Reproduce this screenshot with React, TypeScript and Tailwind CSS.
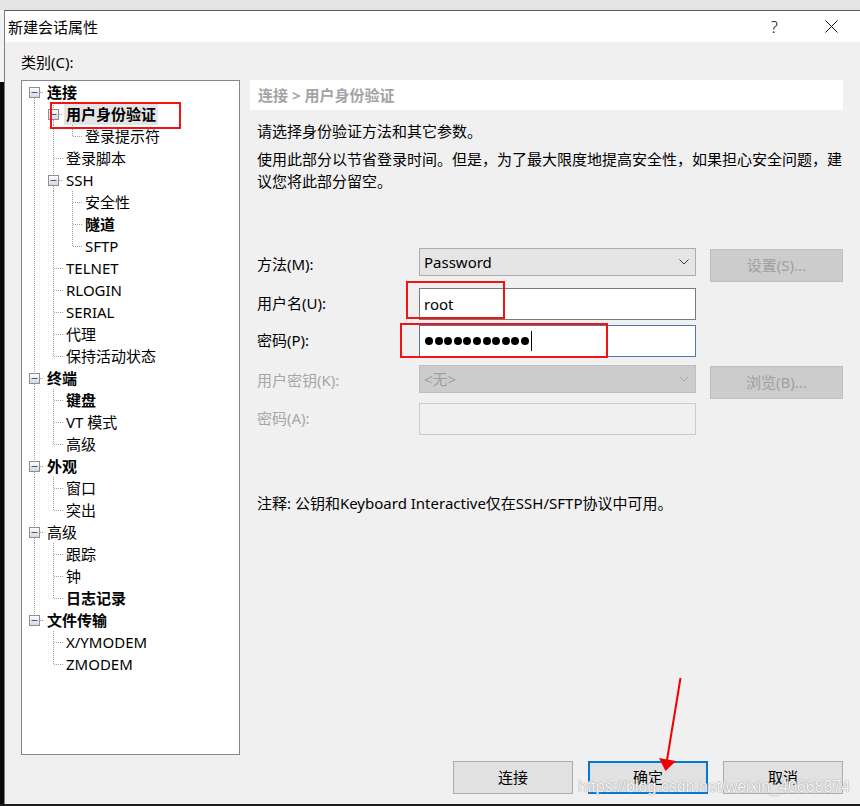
import React from "react";

type Node = { t: string; l: number; b?: boolean; box?: boolean; sel?: boolean };

const tree: Node[] = [
  { t: "连接", l: 0, b: true, box: true },
  { t: "用户身份验证", l: 1, b: true, box: true, sel: true },
  { t: "登录提示符", l: 2 },
  { t: "登录脚本", l: 1 },
  { t: "SSH", l: 1, box: true },
  { t: "安全性", l: 2 },
  { t: "隧道", l: 2, b: true },
  { t: "SFTP", l: 2 },
  { t: "TELNET", l: 1 },
  { t: "RLOGIN", l: 1 },
  { t: "SERIAL", l: 1 },
  { t: "代理", l: 1 },
  { t: "保持活动状态", l: 1 },
  { t: "终端", l: 0, b: true, box: true },
  { t: "键盘", l: 1, b: true },
  { t: "VT 模式", l: 1 },
  { t: "高级", l: 1 },
  { t: "外观", l: 0, b: true, box: true },
  { t: "窗口", l: 1 },
  { t: "突出", l: 1 },
  { t: "高级", l: 0, box: true },
  { t: "跟踪", l: 1 },
  { t: "钟", l: 1 },
  { t: "日志记录", l: 1, b: true },
  { t: "文件传输", l: 0, b: true, box: true },
  { t: "X/YMODEM", l: 1 },
  { t: "ZMODEM", l: 1 },
];

const LINE = "#a0a0a0";

function guideInfo(i: number): boolean[] {
  const r = tree[i];
  const cols: boolean[] = [];
  for (let c = 0; c <= r.l; c++) {
    let cont = false;
    for (let j = i + 1; j < tree.length; j++) {
      if (tree[j].l < c) break;
      if (tree[j].l === c) {
        cont = true;
        break;
      }
    }
    cols.push(cont);
  }
  return cols;
}

function GuideCell({ i, c, cont, own }: { i: number; c: number; cont: boolean; own: boolean }) {
  const r = tree[i];
  const hasBox = own && r.box;
  const showTop = own ? r.l > 0 || i > 0 : false;
  return (
    <svg width="19" height="22" className="block shrink-0">
      {!own && cont && (
        <line x1="9.5" y1="0" x2="9.5" y2="22" stroke={LINE} strokeDasharray="1 1" />
      )}
      {own && showTop && (
        <line x1="9.5" y1="0" x2="9.5" y2={hasBox ? 6 : 11} stroke={LINE} strokeDasharray="1 1" />
      )}
      {own && cont && (
        <line x1="9.5" y1={hasBox ? 17 : 12} x2="9.5" y2="22" stroke={LINE} strokeDasharray="1 1" />
      )}
      {own && (
        <line x1={hasBox ? 15 : 10} y1="11.5" x2="19" y2="11.5" stroke={LINE} strokeDasharray="1 1" />
      )}
      {hasBox && (
        <g>
          <defs>
            <linearGradient id={`bx${i}`} x1="0" y1="0" x2="0" y2="1">
              <stop offset="0" stopColor="#ffffff" />
              <stop offset="1" stopColor="#d6d6d6" />
            </linearGradient>
          </defs>
          <rect x="4.5" y="6.5" width="10" height="10" fill={`url(#bx${i})`} stroke="#8f8f8f" />
          <line x1="6.5" y1="11.5" x2="12.5" y2="11.5" stroke="#3158a8" />
        </g>
      )}
    </svg>
  );
}

function Tree() {
  return (
    <div className="w-[219px] h-[675px] border border-[#828790] bg-white pl-[3px] shrink-0">
      {tree.map((r, i) => {
        const cols = guideInfo(i);
        return (
          <div key={i} className="flex h-[22px] items-center">
            {cols.map((cont, c) => (
              <GuideCell key={c} i={i} c={c} cont={cont} own={c === r.l} />
            ))}
            {r.sel ? (
              <span className="ml-[1px] px-[2px] bg-[#e5e5e5] leading-[22px] text-[15px] font-bold text-black whitespace-nowrap">
                {r.t}
              </span>
            ) : (
              <span
                className={
                  "ml-[3px] leading-[22px] text-[15px] text-black whitespace-nowrap " +
                  (r.b ? "font-bold" : "font-normal")
                }
              >
                {r.t}
              </span>
            )}
          </div>
        );
      })}
    </div>
  );
}

function Chevron({ color }: { color: string }) {
  return (
    <svg width="10" height="6" className="block">
      <polyline points="0.5,0.5 5,5 9.5,0.5" fill="none" stroke={color} strokeWidth="1" />
    </svg>
  );
}

function Label({ text, disabled }: { text: string; disabled?: boolean }) {
  return (
    <div
      className={
        "w-[162px] shrink-0 mt-[4px] leading-[22px] text-[15px] " +
        (disabled ? "text-[#a6a6a6]" : "text-black")
      }
    >
      {text}
    </div>
  );
}

function RightPanel() {
  return (
    <div className="ml-[10px] w-[593px] flex flex-col">
      <div className="h-[30px] bg-white pl-[8px] flex items-center text-[15px] font-bold text-[#a3a3a3]">
        连接 &gt; 用户身份验证
      </div>
      <div className="pl-[7px] flex flex-col">
        <div className="mt-[10px] leading-[22px] text-[15px] text-black">请选择身份验证方法和其它参数。</div>
        <div className="mt-[6px] leading-[22px] text-[15px] text-black">
          使用此部分以节省登录时间。但是，为了最大限度地提高安全性，如果担心安全问题，建议您将此部分留空。
        </div>

        {/* form */}
        <div className="mt-[56px] flex flex-col">
          {/* 方法 */}
          <div className="flex h-[34px]">
            <div className="w-[162px] shrink-0 mt-[5px] leading-[22px] text-[15px] text-black">方法(M):</div>
            <div className="w-[277px] h-[28px] border border-[#adadad] bg-[#e5e5e5] flex items-center justify-between pl-[4px] pr-[6px]">
              <span className="text-[15px] text-black leading-[22px]">Password</span>
              <Chevron color="#3a3a3a" />
            </div>
            <div className="ml-[14px] mt-[1px] w-[133px] h-[33px] border border-[#bfbfbf] bg-[#cccccc] flex items-center justify-center text-[15px] text-[#a0a0a0]">
              设置(S)...
            </div>
          </div>
          {/* 用户名 */}
          <div className="flex h-[32px] mt-[6px]">
            <Label text="用户名(U):" />
            <div className="w-[277px] h-[32px] border border-[#7a7a7a] bg-white flex items-center pl-[4px]">
              <span className="text-[15px] text-black leading-[22px]">root</span>
            </div>
          </div>
          {/* 密码 */}
          <div className="flex h-[32px] mt-[5px]">
            <Label text="密码(P):" />
            <div className="w-[277px] h-[32px] border border-[#5177a3] bg-white flex items-center pl-[5px]">
              <div className="flex items-center gap-[1.6px]">
                {Array.from({ length: 11 }).map((_, k) => (
                  <span key={k} className="block w-[8px] h-[8px] rounded-full bg-black" />
                ))}
              </div>
              <span className="block w-[1px] h-[20px] bg-black ml-[2px]" />
            </div>
          </div>
          {/* 用户密钥 */}
          <div className="flex h-[34px] mt-[8px]">
            <Label text="用户密钥(K):" disabled />
            <div className="w-[277px] h-[28px] border border-[#bfbfbf] bg-[#cccccc] flex items-center justify-between pl-[4px] pr-[6px]">
              <span className="text-[15px] text-[#a0a0a0] leading-[22px]">&lt;无&gt;</span>
              <Chevron color="#a8a8a8" />
            </div>
            <div className="ml-[14px] mt-[1px] w-[133px] h-[33px] border border-[#bfbfbf] bg-[#cccccc] flex items-center justify-center text-[15px] text-[#a0a0a0]">
              浏览(B)...
            </div>
          </div>
          {/* 密码 A */}
          <div className="flex h-[32px] mt-[4px]">
            <Label text="密码(A):" disabled />
            <div className="w-[277px] h-[32px] border border-[#cccccc] bg-[#f0f0f0]" />
          </div>
        </div>

        <div className="mt-[57px] leading-[22px] text-[15px] text-black">
          注释: 公钥和Keyboard Interactive仅在SSH/SFTP协议中可用。
        </div>
      </div>
    </div>
  );
}

function Btn({ text, def }: { text: string; def?: boolean }) {
  return (
    <div
      className={
        "w-[120px] h-[33px] bg-[#e1e1e1] flex items-center justify-center text-[15px] text-black " +
        (def ? "border-2 border-[#0078d7]" : "border border-[#adadad]")
      }
    >
      {text}
    </div>
  );
}

export default function App() {
  return (
    <div className="relative w-[860px] h-[806px] overflow-hidden flex flex-col bg-[#e3e3e3] [font-family:'Noto_Sans','Noto_Sans_CJK_SC',sans-serif]">
      <div className="h-[10px] bg-[#e4e4e4] shrink-0" />
      <div className="flex h-[794px] shrink-0">
        <div className="w-[4px] flex flex-col shrink-0">
          <div className="h-[72px] bg-[#f3f3f3]" />
          <div className="flex-1 bg-[#0a0a0a]" />
        </div>
        <div className="flex-1 flex flex-col border-l border-t border-l-[#7d7d7d] border-t-[#5c5c5c]">
          {/* title bar */}
          <div className="h-[31px] bg-white flex items-center shrink-0">
            <div className="pl-[3px] text-[15px] text-black leading-[22px]">新建会话属性</div>
            <div className="flex-1" />
            <div className="w-[57px] h-[31px] flex items-center justify-center text-[16px] font-light text-black">?</div>
            <div className="w-[57px] h-[31px] flex items-center justify-center">
              <svg width="13" height="13" className="block">
                <line x1="0.5" y1="0.5" x2="12.5" y2="12.5" stroke="#111" strokeWidth="1" />
                <line x1="12.5" y1="0.5" x2="0.5" y2="12.5" stroke="#111" strokeWidth="1" />
              </svg>
            </div>
          </div>
          {/* body */}
          <div className="flex-1 bg-[#f0f0f0] pl-[16px] pt-[10px]">
            <div className="w-[822px] flex flex-col">
              <div className="h-[20px] leading-[20px] text-[15px] text-black">类别(C):</div>
              <div className="mt-[8px] h-[675px] flex">
                <Tree />
                <RightPanel />
              </div>
              <div className="mt-[6px] flex justify-end gap-[15px]">
                <Btn text="连接" />
                <Btn text="确定" def />
                <Btn text="取消" />
              </div>
            </div>
          </div>
        </div>
      </div>
      <div className="h-[2px] bg-[#1c1c1c] shrink-0" />

      {/* annotations */}
      <div className="absolute left-[50px] top-[102px] w-[131px] h-[27px] border-2 border-[#f01414]" />
      <div className="absolute left-[406px] top-[281px] w-[99px] h-[38px] border-2 border-[#f01414]" />
      <div className="absolute left-[400px] top-[323px] w-[208px] h-[35px] border-2 border-[#f01414]" />
      <svg className="absolute left-0 top-0 pointer-events-none" width="860" height="806">
        <line x1="680.5" y1="678" x2="667" y2="760" stroke="#f00000" strokeWidth="2" />
        <polygon points="659,758 676,761 665.5,771" fill="#f00000" />
      </svg>
      <div className="absolute left-[578px] top-[777px] text-[16px] leading-[20px] text-white/90 whitespace-nowrap [font-family:'Liberation_Sans',sans-serif] [text-shadow:0_0_1px_#9a9a9a,0_0_1px_#9a9a9a]">
        https://blog.csdn.net/weixin_40668374
      </div>
    </div>
  );
}
